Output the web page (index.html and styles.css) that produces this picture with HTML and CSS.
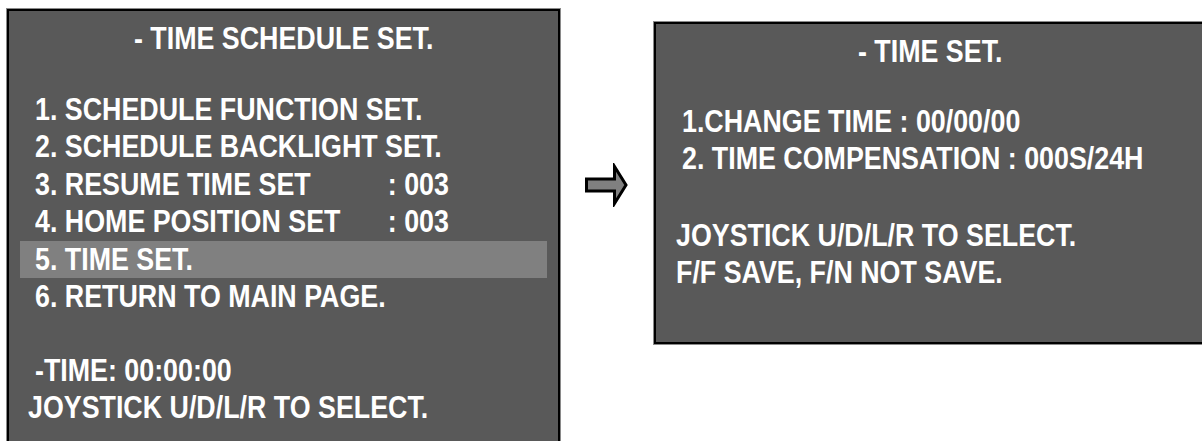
FILE: index.html
```html
<!DOCTYPE html>
<html>
<head>
<meta charset="utf-8">
<link rel="stylesheet" href="styles.css">
</head>
<body>
<div class="stage">
  <section class="osd osd-left">
    <div class="title"><span class="t mid">- TIME SCHEDULE SET.</span></div>
    <ul class="menu">
      <li class="row"><span class="t">1. SCHEDULE FUNCTION SET.</span></li>
      <li class="row"><span class="t">2. SCHEDULE BACKLIGHT SET.</span></li>
      <li class="row"><span class="t"><span class="col">3. RESUME TIME SET</span><span class="val">: 003</span></span></li>
      <li class="row"><span class="t"><span class="col">4. HOME POSITION SET</span><span class="val">: 003</span></span></li>
      <li class="row selected"><span class="t">5. TIME SET.</span></li>
      <li class="row"><span class="t">6. RETURN TO MAIN PAGE.</span></li>
    </ul>
    <div class="foot">
      <div class="row"><span class="t">-TIME: 00:00:00</span></div>
      <div class="row outdent"><span class="t">JOYSTICK U/D/L/R TO SELECT.</span></div>
    </div>
  </section>

  <svg class="arrow" width="46" height="44" viewBox="0 0 46 44">
    <path d="M3.5 16 H31.5 V3.5 L43 22 L31.5 40.5 V28 H3.5 Z" fill="#808080" stroke="#000" stroke-width="3" stroke-linejoin="miter"/>
  </svg>

  <section class="osd osd-right">
    <div class="title"><span class="t mid">- TIME SET.</span></div>
    <div class="items">
      <div class="row"><span class="t">1.CHANGE TIME : 00/00/00</span></div>
      <div class="row"><span class="t">2. TIME COMPENSATION : 000S/24H</span></div>
    </div>
    <div class="help">
      <div class="row"><span class="t">JOYSTICK U/D/L/R TO SELECT.</span></div>
      <div class="row"><span class="t">F/F SAVE, F/N NOT SAVE.</span></div>
    </div>
  </section>
</div>
</body>
</html>
```

FILE: styles.css
```css
html, body {
  margin: 0;
  padding: 0;
  background: #ffffff;
  overflow: hidden;
}

body {
  width: 1202px;
  height: 441px;
  font-family: "Liberation Sans", Arial, sans-serif;
  font-weight: bold;
  color: #ffffff;
}

.stage {
  display: flex;
  align-items: flex-start;
  padding: 9px 0 0 7px;
  width: 1300px;
}

.osd {
  flex: none;
  box-sizing: border-box;
  width: 553px;
  background: #595959;
  border: 2px solid #000;
  box-shadow: 0 0 0 1px #8a8a8a;
  font-size: 32px;
  line-height: 37.5px;
}

.row {
  white-space: nowrap;
}

/* condensed lettering (OSD font is a condensed sans) */
.t {
  display: inline-block;
  white-space: nowrap;
  transform: scaleX(0.838);
  transform-origin: left center;
}

.t.mid {
  transform-origin: center center;
}

/* left panel */
.osd-left {
  height: 470px;
  padding: 9px 11px 0 11px;
}

.osd-left .title {
  text-align: center;
  margin-left: -11px;
  margin-right: -11px;
}

.menu {
  list-style: none;
  margin: 33px 0 0 0;
  padding: 0;
}

.menu .row {
  padding-left: 15px;
}

.menu .t {
  display: inline-flex;
}

.menu .col {
  width: 421px;
}

.menu .selected {
  background: #808080;
}

.foot {
  margin-top: 36px;
}

.foot .row {
  padding-left: 15px;
}

.foot .outdent {
  padding-left: 8px;
}

/* arrow */
.arrow {
  flex: none;
  display: block;
  margin: 154px 0 0 23px;
}

/* right panel */
.osd-right {
  margin: 13px 0 0 25px;
  height: 322px;
  padding: 9px 20px 0 20px;
}

.osd-right .title {
  text-align: center;
}

.items {
  margin-top: 32px;
  padding-left: 6px;
}

.help {
  margin-top: 39px;
}
```
